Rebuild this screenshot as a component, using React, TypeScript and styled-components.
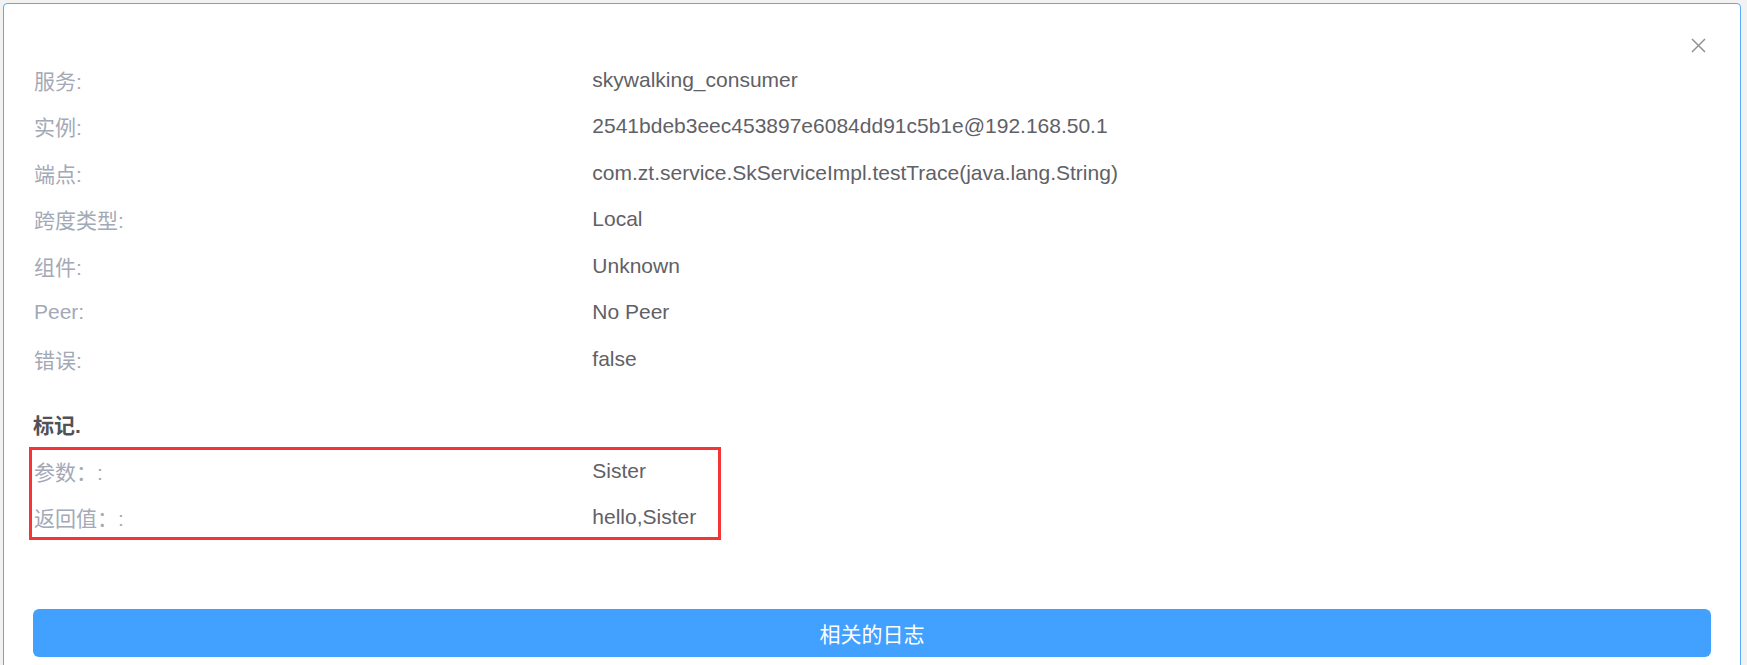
import React from "react";
import styled, { createGlobalStyle } from "styled-components";

const GlobalStyle = createGlobalStyle`
  html, body {
    margin: 0;
    padding: 0;
    background: #f2f2f2;
    font-family: "Liberation Sans", "Noto Sans CJK SC", Arial, sans-serif;
  }
  * { box-sizing: border-box; }
`;

const Page = styled.div`
  padding: 3px 6px 0 3px;
  height: 665px;
  overflow: hidden;
`;

const Dialog = styled.div`
  background: #ffffff;
  border: 1px solid #5aaaf7;
  border-radius: 4px;
  padding: 0 29px 0 29px;
  min-height: 700px;
`;

const Header = styled.div`
  display: flex;
  justify-content: flex-end;
  align-items: flex-start;
  height: 52.5px;
  padding-top: 34px;
  padding-right: 5px;
`;

const CloseButton = styled.button`
  width: 15px;
  height: 15px;
  padding: 0;
  border: none;
  background: transparent;
  cursor: pointer;
  display: flex;
  align-items: center;
  justify-content: center;
`;

const InfoList = styled.div`
  display: flex;
  flex-direction: column;
`;

const Row = styled.div`
  display: grid;
  grid-template-columns: 1fr 2fr;
  align-items: center;
  height: 46.5px;
  font-size: 21px;
`;

const Label = styled.span`
  color: #a3a9b6;
  padding-left: 1px;
  white-space: nowrap;
`;

const Value = styled.span`
  color: #5f6166;
  white-space: nowrap;
`;

const SectionTitle = styled.div`
  margin-top: 18.75px;
  height: 46.5px;
  display: flex;
  align-items: center;
  font-size: 21px;
  font-weight: bold;
  color: #505256;
`;

const TagBlock = styled.div`
  position: relative;
  display: flex;
  flex-direction: column;
`;

const Highlight = styled.div`
  position: absolute;
  top: 0;
  bottom: 0;
  left: -4px;
  width: 692px;
  border: 3px solid #f43535;
  pointer-events: none;
`;

const LogButton = styled.button`
  display: flex;
  align-items: center;
  justify-content: center;
  width: 100%;
  height: 47.5px;
  margin-top: 69px;
  border: none;
  border-radius: 6px;
  background: #42a0ff;
  color: #ffffff;
  font-family: "Liberation Sans", "Noto Sans CJK SC", sans-serif;
  font-size: 21px;
  padding-bottom: 2px;
  cursor: pointer;
`;

const info: [string, string][] = [
  ["服务:", "skywalking_consumer"],
  ["实例:", "2541bdeb3eec453897e6084dd91c5b1e@192.168.50.1"],
  ["端点:", "com.zt.service.SkServiceImpl.testTrace(java.lang.String)"],
  ["跨度类型:", "Local"],
  ["组件:", "Unknown"],
  ["Peer:", "No Peer"],
  ["错误:", "false"],
];

const tags: [string, string][] = [
  ["参数：:", "Sister"],
  ["返回值：:", "hello,Sister"],
];

export default function App() {
  return (
    <>
      <GlobalStyle />
      <Page>
        <Dialog>
          <Header>
            <CloseButton aria-label="close">
              <svg width="15" height="15" viewBox="0 0 15 15">
                <path d="M1 1 L14 14 M14 1 L1 14" stroke="#8f9297" strokeWidth="1.5" fill="none" />
              </svg>
            </CloseButton>
          </Header>
          <InfoList>
            {info.map(([k, v]) => (
              <Row key={k}>
                <Label>{k}</Label>
                <Value>{v}</Value>
              </Row>
            ))}
          </InfoList>
          <SectionTitle>标记.</SectionTitle>
          <TagBlock>
            {tags.map(([k, v]) => (
              <Row key={k}>
                <Label>{k}</Label>
                <Value>{v}</Value>
              </Row>
            ))}
            <Highlight />
          </TagBlock>
          <LogButton>相关的日志</LogButton>
        </Dialog>
      </Page>
    </>
  );
}
